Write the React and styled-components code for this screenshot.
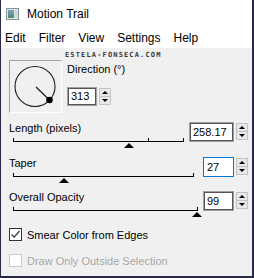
import React from "react";
import styled, { createGlobalStyle } from "styled-components";

const Global = createGlobalStyle`
  html, body { margin: 0; padding: 0; background: #f0f0f0; }
  body { font-family: "Liberation Sans", Arial, sans-serif; }
  * { box-sizing: border-box; }
`;

const Window = styled.div`
  width: 254px;
  height: 278px;
  display: flex;
  flex-direction: column;
  border-left: 1px solid #2a2a48;
  border-right: 2px solid #2a2a48;
  border-bottom: 2px solid #2a2a48;
  background: #f0f0f0;
  overflow: hidden;
`;

const TitleBar = styled.div`
  height: 28px;
  flex: none;
  display: flex;
  align-items: center;
  gap: 8px;
  padding-left: 5px;
  background: #fff;
  font: 12px "Liberation Sans", Arial, sans-serif;
  color: #000;
`;

const MenuBar = styled.div`
  height: 20px;
  flex: none;
  display: flex;
  align-items: center;
  gap: 13px;
  padding-left: 4px;
  background: #fff;
  font: 12px "Liberation Sans", Arial, sans-serif;
  color: #000;
`;

const MenuItem = styled.span`
  line-height: 20px;
`;

const Content = styled.div`
  position: relative;
  flex: 1;
  display: flex;
  flex-direction: column;
  padding: 12px 4px 0 8px;
  font: 11px "Liberation Sans", Arial, sans-serif;
  color: #000;
`;

const Watermark = styled.div`
  position: absolute;
  left: 64px;
  top: 4px;
  font: bold 7px/7px "DejaVu Sans Mono", monospace;
  letter-spacing: 1.15px;
  color: #3a3a3a;
`;

const TopRow = styled.div`
  display: flex;
  gap: 5px;
  height: 53px;
`;

const DirFrame = styled.div`
  width: 53px;
  height: 53px;
  border-top: 1px solid #a0a0a0;
  border-left: 1px solid #a0a0a0;
  border-right: 1px solid #fff;
  border-bottom: 1px solid #fff;
  display: flex;
  align-items: center;
  justify-content: center;
`;

const DirColumn = styled.div`
  display: flex;
  flex-direction: column;
  padding-top: 3px;
  gap: 11px;
`;

const Label = styled.div`
  line-height: 13px;
  height: 13px;
  white-space: nowrap;
`;

const InputGroup = styled.div`
  display: flex;
  align-items: flex-start;
  gap: 2px;
`;

const Field = styled.div`
  width: ${(p) => p.$w}px;
  height: ${(p) => (p.$h ? p.$h : 20)}px;
  background: #fff;
  border: 1px solid ${(p) => (p.$focus ? "#0078d7" : "#a0a0a0")};
  box-shadow: ${(p) =>
    p.$focus ? "none" : "inset 1px 1px 0 #555, inset -1px -1px 0 #555"};
  padding: 0 0 0 3px;
  font: 11px "Liberation Sans", Arial, sans-serif;
  line-height: ${(p) => (p.$h ? p.$h - 2 : 18)}px;
  color: #000;
`;

const Spinner = styled.div`
  width: 12px;
  height: 17px;
  margin-top: 1px;
  display: flex;
  flex-direction: column;
  border: 1px solid #c4c4c4;
  background: #e8e8e8;
`;

const SpinHalf = styled.div`
  flex: 1;
  display: flex;
  align-items: center;
  justify-content: center;
  border-top: ${(p) => (p.$down ? "1px solid #c4c4c4" : "none")};
`;

const Arrow = styled.div`
  width: 0;
  height: 0;
  border-left: 3px solid transparent;
  border-right: 3px solid transparent;
  ${(p) =>
    p.$down
      ? "border-top: 3px solid #000;"
      : "border-bottom: 3px solid #000;"}
`;

const Section = styled.div`
  display: flex;
  justify-content: space-between;
  align-items: flex-start;
  margin-top: ${(p) => p.$mt}px;
  height: 29px;
`;

const SliderCol = styled.div`
  display: flex;
  flex-direction: column;
`;

const Track = styled.div`
  position: relative;
  margin-left: 4px;
  width: ${(p) => p.$w}px;
  height: 16px;
`;

const Line = styled.div`
  margin-top: ${(p) => p.$off}px;
  height: 1px;
  background: #000;
`;

const Tick = styled.div`
  position: absolute;
  top: ${(p) => p.$off - 3}px;
  width: 1px;
  height: 3px;
  background: #000;
`;

const Thumb = styled.div`
  position: absolute;
  top: ${(p) => p.$off + 2}px;
  width: 0;
  height: 0;
  margin-left: -5px;
  border-left: 5.5px solid transparent;
  border-right: 5.5px solid transparent;
  border-bottom: 5px solid #000;
`;

const CheckRow = styled.label`
  display: flex;
  align-items: center;
  gap: 5px;
  margin-top: ${(p) => p.$mt}px;
  height: 13px;
  color: ${(p) => (p.$disabled ? "#a8a8a8" : "#000")};
  white-space: nowrap;
`;

const Box = styled.div`
  width: 13px;
  height: 13px;
  background: #fff;
  border: 1px solid ${(p) => (p.$disabled ? "#cccccc" : "#333")};
  display: flex;
  align-items: center;
  justify-content: center;
`;

const Spin = () => (
  <Spinner>
    <SpinHalf>
      <Arrow />
    </SpinHalf>
    <SpinHalf $down>
      <Arrow $down />
    </SpinHalf>
  </Spinner>
);

const Slider = ({ width, value, ticks }) => {
  const off = 6;
  return (
    <Track $w={width}>
      <Line $off={off} />
      {ticks.map((t) => (
        <Tick key={t} $off={off} style={{ left: `${t * (width - 1)}px` }} />
      ))}
      <Thumb $off={off} style={{ left: `${value * width}px` }} />
    </Track>
  );
};

const SliderSection = ({ label, mt, width, value, ticks, field, fieldW, focus }) => (
  <Section $mt={mt}>
    <SliderCol>
      <Label>{label}</Label>
      <Slider width={width} value={value} ticks={ticks} />
    </SliderCol>
    <InputGroup>
      <Field $w={fieldW} $focus={focus}>
        {field}
      </Field>
      <Spin />
    </InputGroup>
  </Section>
);

const AppIcon = () => (
  <svg width="13" height="12" viewBox="0 0 13 12">
    <rect x="0.5" y="0.5" width="12" height="11" fill="#dfe6ea" stroke="#8a9096" />
    <defs>
      <linearGradient id="g" x1="0" y1="0" x2="0" y2="1">
        <stop offset="0" stopColor="#7fa0b8" />
        <stop offset="1" stopColor="#4f8a6e" />
      </linearGradient>
    </defs>
    <rect x="2" y="2" width="6" height="8" fill="url(#g)" />
    <rect x="9" y="2" width="2" height="8" fill="#c9d3da" />
  </svg>
);

const Dial = () => (
  <svg width="51" height="51" viewBox="0 0 51 51">
    <circle cx="25" cy="25.5" r="20" fill="none" stroke="#1a1a1a" strokeWidth="1.1" />
    <line x1="26" y1="26" x2="39.5" y2="39" stroke="#1a1a1a" strokeWidth="1.2" />
    <circle cx="39.5" cy="39" r="3.3" fill="#000" />
  </svg>
);

const Check = () => (
  <svg width="11" height="11" viewBox="0 0 11 11">
    <path d="M1.5 5.5 L4.2 8.2 L9.5 2" fill="none" stroke="#333" strokeWidth="1.2" />
  </svg>
);

export default function App() {
  return (
    <>
      <Global />
      <Window>
        <TitleBar>
          <AppIcon />
          <span>Motion Trail</span>
        </TitleBar>
        <MenuBar>
          <MenuItem>Edit</MenuItem>
          <MenuItem>Filter</MenuItem>
          <MenuItem>View</MenuItem>
          <MenuItem>Settings</MenuItem>
          <MenuItem>Help</MenuItem>
        </MenuBar>
        <Content>
          <Watermark>ESTELA-FONSECA.COM</Watermark>
          <TopRow>
            <DirFrame>
              <Dial />
            </DirFrame>
            <DirColumn>
              <Label>Direction (°)</Label>
              <InputGroup>
                <Field $w={30} $h={19}>313</Field>
                <Spin />
              </InputGroup>
            </DirColumn>
          </TopRow>
          <SliderSection
            label="Length (pixels)"
            mt={9}
            width={171}
            value={0.68}
            ticks={[0, 0.795, 1]}
            field="258.17"
            fieldW={45}
          />
          <SliderSection
            label="Taper"
            mt={6}
            width={181}
            value={0.28}
            ticks={[0, 1]}
            field="27"
            fieldW={31}
            focus
          />
          <SliderSection
            label="Overall Opacity"
            mt={5}
            width={185}
            value={0.995}
            ticks={[0, 1]}
            field="99"
            fieldW={31}
          />
          <CheckRow $mt={8}>
            <Box>
              <Check />
            </Box>
            Smear Color from Edges
          </CheckRow>
          <CheckRow $mt={13} $disabled>
            <Box $disabled />
            Draw Only Outside Selection
          </CheckRow>
        </Content>
      </Window>
    </>
  );
}
